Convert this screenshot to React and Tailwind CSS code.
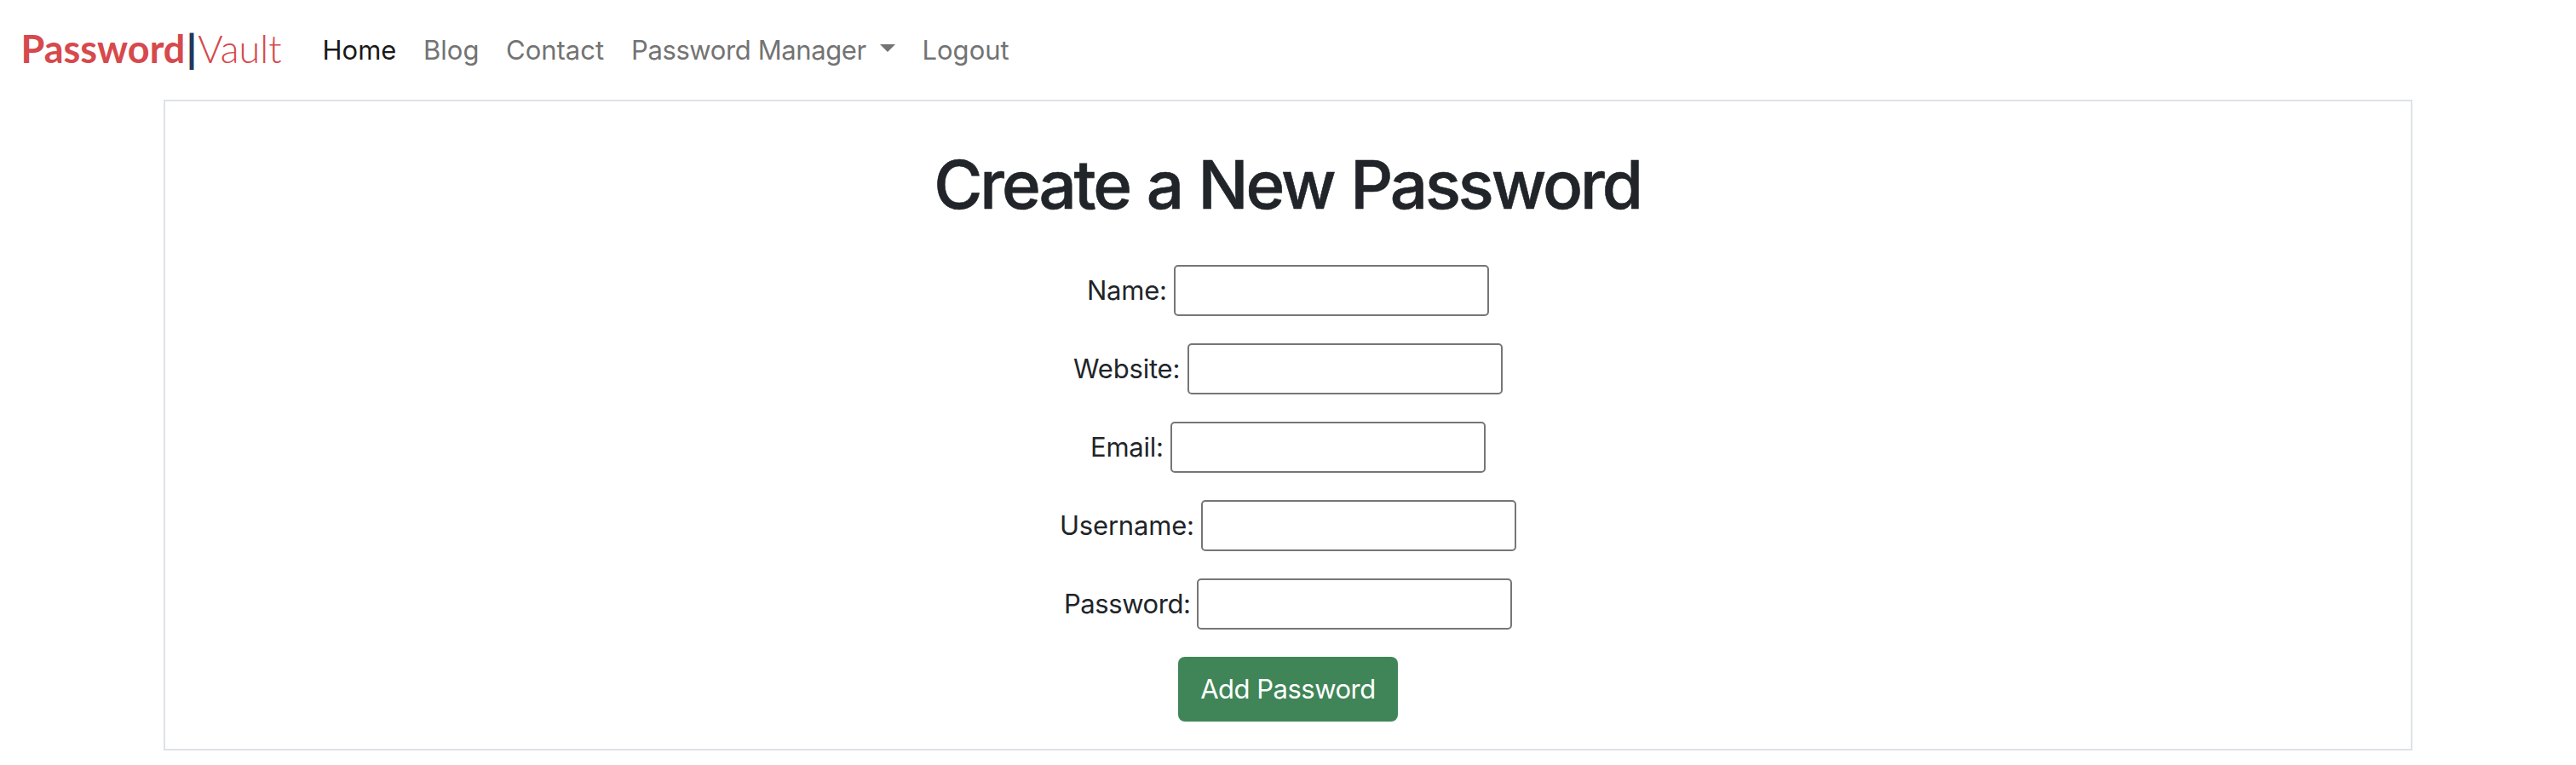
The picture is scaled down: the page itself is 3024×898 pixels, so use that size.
const fields = [
  { id: "name", label: "Name:", type: "text", style: "w-[102px] tracking-[-0.25px]" },
  { id: "website", label: "Website:", type: "text", style: "w-[134px] tracking-[-0.19px]" },
  { id: "email", label: "Email:", type: "email", style: "w-[94px] tracking-[-0.24px]" },
  { id: "username", label: "Username:", type: "text", style: "w-[166px] tracking-[-0.2px]" },
  { id: "password", label: "Password:", type: "password", style: "w-[156px] tracking-[-0.44px]" },
];

function Navbar() {
  return (
    <nav className="flex h-[117px] items-center pl-[24.5px] text-[31px] leading-[48px] text-[#737373]">
      <a
        href="#"
        className="-mt-1 flex w-[354px] items-center whitespace-nowrap font-['Lato',sans-serif] text-[45px] leading-[60px] text-[#d6494c]"
      >
        <span className="font-bold">Password</span>
        <span className="w-[15px] text-center font-black text-[#27375a]">|</span>
        <span className="font-light">Vault</span>
      </a>
      <ul className="flex whitespace-nowrap">
        <li className="w-[118.5px]"><a href="#" className="text-[#191919]">Home</a></li>
        <li className="w-[97px]"><a href="#">Blog</a></li>
        <li className="w-[147px]"><a href="#">Contact</a></li>
        <li className="w-[341.5px]">
          <a href="#" className="flex tracking-[-0.39px]">
            <span className="w-[292px]">Password Manager</span>
            <svg className="mt-[17.5px] h-[9px] w-[18px]" viewBox="0 0 18 9" fill="currentColor">
              <path d="M0 0h18L9 9z" />
            </svg>
          </a>
        </li>
        <li><a href="#">Logout</a></li>
      </ul>
    </nav>
  );
}

export default function App() {
  return (
    <div className="min-h-[898px] bg-white font-['Inter',sans-serif] text-[#212529]">
      <Navbar />
      <main className="mx-auto flex h-[764px] w-[2640px] flex-col items-center border-2 border-[#dee2e6] pt-[50px]">
        <h1 className="h-[142px] whitespace-nowrap pr-0.5 text-[78px] font-medium leading-[96px] tracking-[-3.1px] [word-spacing:2px] [-webkit-text-stroke:0.6px_#212529]">
          Create a New Password
        </h1>
        <form className="flex flex-col items-center gap-8 text-[31px] leading-[48px]">
          {fields.map((f) => (
            <div key={f.id} className="flex h-[60px] items-center">
              <label htmlFor={f.id} className={`whitespace-nowrap ${f.style}`}>{f.label}</label>
              <input
                id={f.id}
                type={f.type}
                className="h-[60px] w-[370px] rounded-[5px] border-2 border-[#767676] bg-white px-1"
              />
            </div>
          ))}
          <button
            type="button"
            className="h-[76px] w-[258px] whitespace-nowrap rounded-lg bg-[#408558] tracking-[-0.5px] text-white"
          >
            Add Password
          </button>
        </form>
      </main>
    </div>
  );
}
